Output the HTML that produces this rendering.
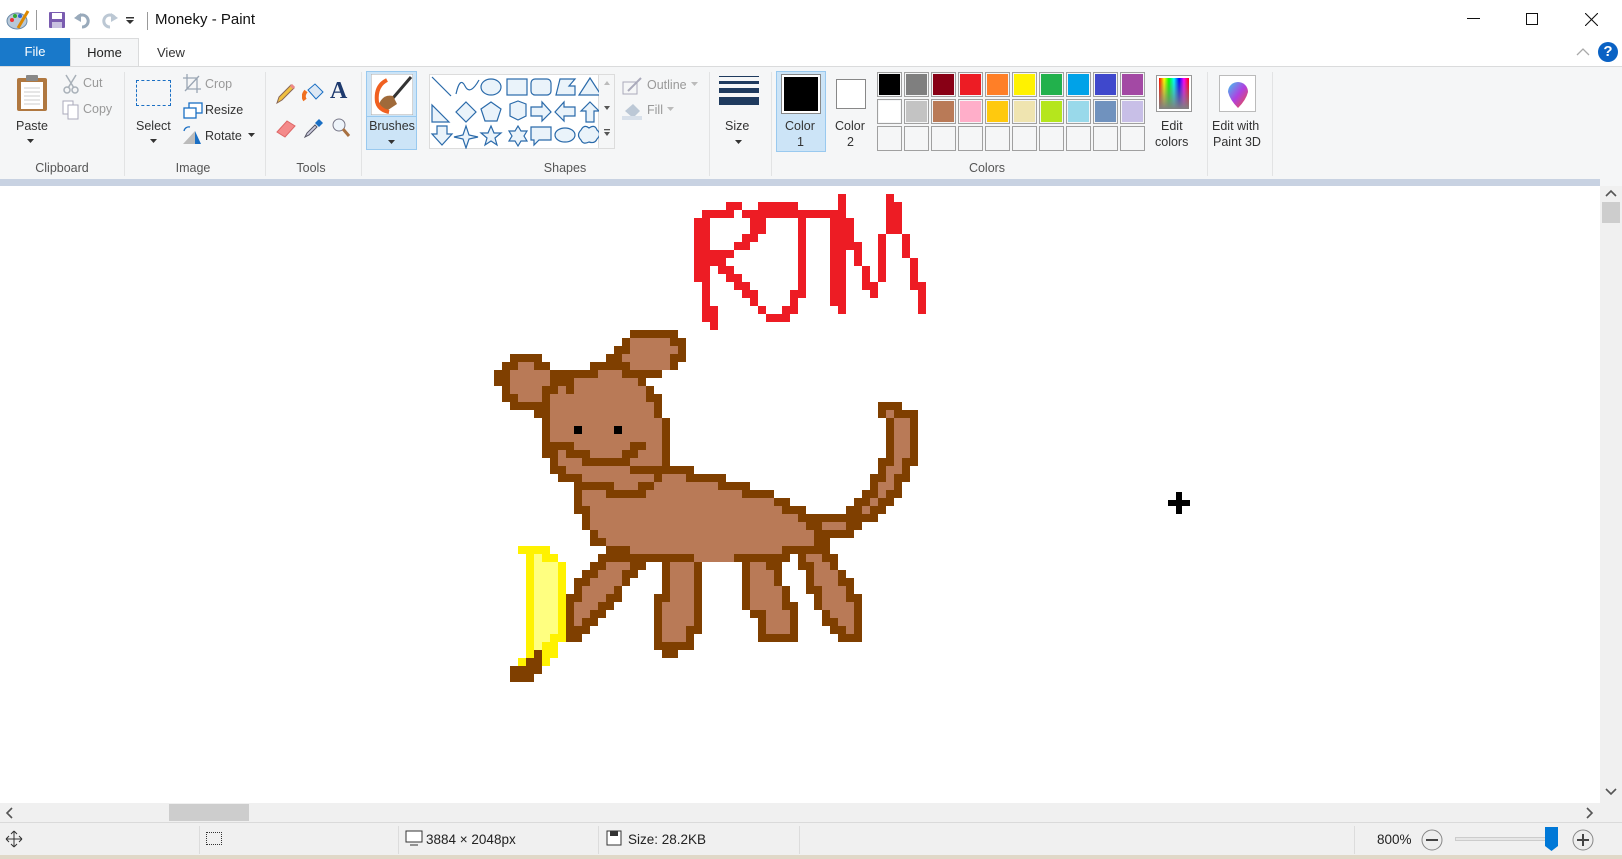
<!DOCTYPE html>
<html><head><meta charset="utf-8">
<style>
*{margin:0;padding:0;box-sizing:border-box}
body{width:1622px;height:859px;overflow:hidden;background:#fff;font-family:"Liberation Sans",sans-serif;color:#222;position:relative}
.a{position:absolute}
.t{position:absolute;font-size:12.5px;color:#333;white-space:nowrap}
.g{position:absolute;font-size:12.5px;color:#555;text-align:center}
.sep{position:absolute;top:72px;width:1px;height:104px;background:#e2e3e4}
.ssep{position:absolute;top:826px;width:1px;height:28px;background:#dcdcdc}
.pc{position:absolute;width:25px;height:25px;border:1px solid #a0a0a0}
.pc i{position:absolute;left:1px;top:1px;right:1px;bottom:1px}
</style></head><body>
<!-- title bar -->
<svg class="a" style="left:6px;top:8px" width="24" height="24" viewBox="0 0 24 24"><ellipse cx="11" cy="13" rx="10" ry="8" fill="#b8c8d8" stroke="#6a8aa8"/><circle cx="6" cy="12" r="2" fill="#e33"/><circle cx="9" cy="8" r="2" fill="#3a3"/><circle cx="14" cy="8" r="2" fill="#36c"/><path d="M12 20 L22 3" stroke="#d80" stroke-width="3"/></svg>
<div class="a" style="left:36px;top:10px;width:1px;height:20px;background:#999"></div>
<svg class="a" style="left:48px;top:11px" width="18" height="18"><rect x="1" y="1" width="16" height="16" fill="#7a5cb0" rx="1"/><rect x="4" y="2" width="10" height="6" fill="#fff"/><rect x="4" y="11" width="10" height="6" fill="#c8c0e0"/></svg>
<svg class="a" style="left:74px;top:11px" width="18" height="18"><path d="M3 7 A6 6 0 1 1 8 16" stroke="#9ab" stroke-width="3" fill="none"/><path d="M0 7 L7 2 L7 11Z" fill="#9ab"/></svg>
<svg class="a" style="left:100px;top:11px" width="18" height="18"><path d="M15 7 A6 6 0 1 0 10 16" stroke="#bcc8d4" stroke-width="3" fill="none"/><path d="M18 7 L11 2 L11 11Z" fill="#bcc8d4"/></svg>
<svg class="a" style="left:126px;top:17px" width="9" height="8"><rect x="0" y="0" width="8" height="1.5" fill="#333"/><path d="M0 3 L8 3 L4 7Z" fill="#333"/></svg>
<div class="a" style="left:147px;top:12px;width:1px;height:18px;background:#999"></div>
<div class="t" style="left:155px;top:11px;font-size:15px;color:#111">Moneky - Paint</div>
<div class="a" style="left:1467px;top:18px;width:13px;height:1px;background:#111"></div>
<div class="a" style="left:1526px;top:13px;width:12px;height:12px;border:1px solid #111"></div>
<svg class="a" style="left:1585px;top:13px" width="13" height="13"><path d="M0 0L13 13M13 0L0 13" stroke="#111" stroke-width="1.1"/></svg>
<!-- tabs -->
<div class="a" style="left:0;top:38px;width:70px;height:28px;background:#1979ca;color:#fff;font-size:13px;text-align:center;line-height:28px">File</div>
<div class="a" style="left:70px;top:38px;width:69px;height:29px;background:#f5f6f7;border:1px solid #dadbdc;border-bottom:none;font-size:13px;text-align:center;line-height:27px">Home</div>
<div class="t" style="left:157px;top:45px;font-size:13px">View</div>
<svg class="a" style="left:1576px;top:48px" width="14" height="8"><path d="M1 7L7 1L13 7" stroke="#aaa" fill="none" stroke-width="1.3"/></svg>
<div class="a" style="left:1598px;top:42px;width:20px;height:20px;border-radius:50%;background:#0a62c4;color:#fff;font-weight:bold;font-size:15px;text-align:center;line-height:20px">?</div>
<!-- ribbon -->
<div class="a" style="left:0;top:66px;width:1622px;height:113px;background:#f5f6f7;border-top:1px solid #dadbdc"></div>
<!-- clipboard -->
<svg class="a" style="left:15px;top:74px" width="34" height="38"><rect x="2" y="4" width="30" height="33" rx="2" fill="#b07840"/><rect x="6" y="8" width="22" height="27" fill="#fff"/><path d="M9 14h16M9 18h16M9 22h16M9 26h16M9 30h16" stroke="#ccc"/><rect x="11" y="1" width="12" height="6" rx="1" fill="#888"/></svg>
<div class="t" style="left:16px;top:119px">Paste</div>
<svg class="a" style="left:27px;top:139px" width="7" height="4"><path d="M0 0h7L3.5 4Z" fill="#333"/></svg>
<svg class="a" style="left:63px;top:74px" width="16" height="20"><circle cx="4" cy="16" r="3" fill="none" stroke="#a8b0b8" stroke-width="1.5"/><circle cx="12" cy="16" r="3" fill="none" stroke="#a8b0b8" stroke-width="1.5"/><path d="M3 1L11 14M13 1L5 14" stroke="#a8b0b8" stroke-width="1.5"/></svg>
<div class="t" style="left:83px;top:76px;color:#999">Cut</div>
<svg class="a" style="left:62px;top:100px" width="18" height="20"><rect x="1" y="1" width="10" height="13" fill="#fff" stroke="#aab"/><rect x="6" y="5" width="10" height="14" fill="#fff" stroke="#aab"/></svg>
<div class="t" style="left:83px;top:102px;color:#999">Copy</div>
<div class="g" style="left:20px;top:161px;width:84px">Clipboard</div>
<div class="sep" style="left:124px"></div>
<!-- image -->
<div class="a" style="left:136px;top:80px;width:35px;height:26px;border:1.5px dashed #1a6fc4"></div>
<div class="t" style="left:136px;top:119px">Select</div>
<svg class="a" style="left:150px;top:139px" width="7" height="4"><path d="M0 0h7L3.5 4Z" fill="#333"/></svg>
<svg class="a" style="left:183px;top:74px" width="18" height="20"><path d="M4 0V15H18M0 4H14V19M2 17L16 2" stroke="#9aa6b4" fill="none" stroke-width="1.3"/></svg>
<div class="t" style="left:205px;top:77px;color:#999">Crop</div>
<svg class="a" style="left:183px;top:102px" width="20" height="17"><rect x="6" y="1" width="13" height="10" fill="#fff" stroke="#1a6fc4" stroke-width="1.3"/><rect x="1" y="6" width="12" height="10" fill="#fff" stroke="#1a6fc4" stroke-width="1.3"/></svg>
<div class="t" style="left:205px;top:103px">Resize</div>
<svg class="a" style="left:182px;top:125px" width="20" height="20"><path d="M2 6 A5 5 0 0 1 8 2" stroke="#1a6fc4" fill="none" stroke-width="1.3"/><path d="M1 19L13 19L13 6Z" fill="#bbb"/><path d="M13 19L19 19L13 6Z" fill="#1a6fc4"/></svg>
<div class="t" style="left:205px;top:129px">Rotate</div>
<svg class="a" style="left:248px;top:133px" width="7" height="4"><path d="M0 0h7L3.5 4Z" fill="#333"/></svg>
<div class="g" style="left:150px;top:161px;width:86px">Image</div>
<div class="sep" style="left:265px"></div>
<!-- tools -->
<svg class="a" style="left:275px;top:83px" width="20" height="22"><path d="M2 20L4 14L16 2L19 5L7 17Z" fill="#f0c040" stroke="#865" /><path d="M16 2L19 5" stroke="#e88" stroke-width="3"/></svg>
<svg class="a" style="left:302px;top:82px" width="22" height="22"><path d="M6 8L13 2L21 10L14 17Z" fill="#dde8f4" stroke="#1a6fc4"/><path d="M4 9Q0 14 3 18" stroke="#f07020" stroke-width="4" fill="none"/></svg>
<div class="a" style="left:330px;top:78px;font-family:'Liberation Serif',serif;font-weight:bold;font-size:24px;color:#1e3a6e">A</div>
<svg class="a" style="left:275px;top:118px" width="22" height="20"><path d="M2 14L12 3L20 8L10 19Z" fill="#f48a8a" stroke="#d66"/></svg>
<svg class="a" style="left:303px;top:117px" width="20" height="22"><path d="M2 20L4 16L12 8L14 10L6 18Z" fill="#ccd" stroke="#556"/><path d="M12 6L16 2L20 6L16 10Z" fill="#1a6fc4"/></svg>
<svg class="a" style="left:331px;top:117px" width="20" height="22"><circle cx="8" cy="8" r="6" fill="#eef4fa" stroke="#778"/><path d="M12 12L18 19" stroke="#a87040" stroke-width="3"/></svg>
<div class="g" style="left:280px;top:161px;width:62px">Tools</div>
<div class="sep" style="left:361px"></div>
<!-- brushes -->
<div class="a" style="left:366px;top:71px;width:51px;height:79px;background:#cce4f7;border:1px solid #99c9ef"></div>
<div class="a" style="left:366px;top:116px;width:51px;height:1px;background:#99c9ef"></div>
<svg class="a" style="left:371px;top:74px" width="42" height="41"><rect x="0" y="0" width="42" height="41" fill="#fff" stroke="#aaa"/><path d="M40 3L22 24" stroke="#333" stroke-width="3"/><path d="M22 22Q12 20 8 30Q6 36 14 38L26 30Z" fill="#a06a3a"/><path d="M16 6Q4 12 6 28Q8 36 18 38" stroke="#f06020" stroke-width="4" fill="none"/></svg>
<div class="t" style="left:367px;top:119px;width:50px;text-align:center">Brushes</div>
<svg class="a" style="left:388px;top:140px" width="7" height="4"><path d="M0 0h7L3.5 4Z" fill="#333"/></svg>
<!-- shapes -->
<div class="a" style="left:429px;top:74px;width:170px;height:75px;background:#fff;border:1px solid #dcdcdc"></div>
<svg class="a" style="left:429px;top:74px" width="170" height="75" fill="#eaf3fa" stroke="#2a6aaa" stroke-width="1.2">
<path d="M3 3L22 22" fill="none"/>
<path d="M27 20Q31 2 36 12T50 6" fill="none"/>
<ellipse cx="62" cy="13" rx="10" ry="8"/>
<rect x="78" y="5" width="20" height="16"/>
<rect x="102" y="5" width="20" height="16" rx="4"/>
<path d="M127 21L131 5H146L140 12H146V21Z"/>
<path d="M161 4L150 21H172Z"/>
<path d="M3 31V48H20Z"/>
<path d="M37 28L47 38L37 48L27 38Z"/>
<path d="M62 28L72 35L68 47H56L52 35Z"/>
<path d="M81 30L89 27L97 30V42L89 46L81 42Z"/>
<path d="M102 33H113V28L122 38L113 47V42H102Z"/>
<path d="M146 33H135V28L126 38L135 47V42H146Z"/>
<path d="M161 28L170 37H165V48H157V37H152Z"/>
<path d="M8 52V60H3L13 71L23 60H18V52Z"/>
<path d="M37 52L40 61L49 63L40 65L37 74L34 65L25 63L34 61Z"/>
<path d="M62 52L65 59L72 59L66 64L68 71L62 67L56 71L58 64L52 59L59 59Z"/>
<path d="M89 52L92 57H98L95 62L98 67H92L89 72L86 67H80L83 62L80 57H86Z"/>
<path d="M102 53H122V66H110L105 71V66H102Z"/>
<ellipse cx="136" cy="61" rx="10" ry="7"/>
<path d="M152 56Q155 50 160 54Q166 50 168 56Q173 60 168 65Q166 70 160 68Q154 71 152 66Q147 61 152 56Z"/>
</svg>
<div class="a" style="left:599px;top:74px;width:16px;height:75px;border:1px solid #dcdcdc;border-left:none"></div>
<svg class="a" style="left:603px;top:80px" width="8" height="60"><path d="M1 5L4 1L7 5Z" fill="#bbb"/><path d="M1 26L4 30L7 26Z" fill="#555"/><rect x="1" y="49" width="6" height="1.3" fill="#555"/><path d="M1 52L4 56L7 52Z" fill="#555"/></svg>
<svg class="a" style="left:622px;top:77px" width="22" height="18"><rect x="1" y="5" width="14" height="12" fill="none" stroke="#aab"/><path d="M6 14L19 1" stroke="#aab" stroke-width="2"/></svg>
<div class="t" style="left:647px;top:78px;color:#999">Outline</div>
<svg class="a" style="left:691px;top:82px" width="7" height="4"><path d="M0 0h7L3.5 4Z" fill="#bbb"/></svg>
<svg class="a" style="left:622px;top:101px" width="22" height="20"><path d="M3 10L11 3L18 10L11 17Z" fill="#bcc8d6"/><rect x="0" y="15" width="20" height="4" fill="#d8e0ea"/></svg>
<div class="t" style="left:647px;top:103px;color:#999">Fill</div>
<svg class="a" style="left:667px;top:107px" width="7" height="4"><path d="M0 0h7L3.5 4Z" fill="#bbb"/></svg>
<div class="g" style="left:525px;top:161px;width:80px">Shapes</div>
<div class="sep" style="left:709px"></div>
<!-- size -->
<div class="a" style="left:719px;top:76px;width:40px;height:1px;background:#1e3a5e"></div>
<div class="a" style="left:719px;top:81px;width:40px;height:3px;background:#1e3a5e"></div>
<div class="a" style="left:719px;top:88px;width:40px;height:5px;background:#1e3a5e"></div>
<div class="a" style="left:719px;top:97px;width:40px;height:8px;background:#1e3a5e"></div>
<div class="t" style="left:725px;top:119px">Size</div>
<svg class="a" style="left:735px;top:140px" width="7" height="4"><path d="M0 0h7L3.5 4Z" fill="#333"/></svg>
<div class="sep" style="left:771px"></div>
<!-- color 1/2 -->
<div class="a" style="left:776px;top:71px;width:50px;height:81px;background:#cce4f7;border:1px solid #99c9ef"></div>
<div class="a" style="left:781px;top:74px;width:40px;height:40px;border:1px solid #888;background:#fff;padding:2px"><div style="width:100%;height:100%;background:#000"></div></div>
<div class="t" style="left:785px;top:119px">Color</div>
<div class="t" style="left:797px;top:135px">1</div>
<div class="a" style="left:836px;top:79px;width:30px;height:30px;border:1px solid #888;background:#fff"></div>
<div class="t" style="left:835px;top:119px">Color</div>
<div class="t" style="left:847px;top:135px">2</div>
<div id="pal"></div>
<svg class="a" style="left:1156px;top:75px" width="36" height="37"><defs><linearGradient id="hg" x1="0" x2="1"><stop offset="0" stop-color="#f00"/><stop offset=".17" stop-color="#ff0"/><stop offset=".33" stop-color="#0f0"/><stop offset=".5" stop-color="#0ff"/><stop offset=".67" stop-color="#00f"/><stop offset=".83" stop-color="#f0f"/><stop offset="1" stop-color="#f00"/></linearGradient><linearGradient id="vg" x1="0" y1="0" x2="0" y2="1"><stop offset="0" stop-color="#808080" stop-opacity="0"/><stop offset="1" stop-color="#808080" stop-opacity="1"/></linearGradient></defs><rect x="0.5" y="0.5" width="35" height="36" fill="#fff" stroke="#999"/><rect x="3" y="3" width="30" height="31" fill="url(#hg)"/><rect x="3" y="3" width="30" height="31" fill="url(#vg)"/></svg>
<div class="t" style="left:1161px;top:119px">Edit</div>
<div class="t" style="left:1155px;top:135px">colors</div>
<div class="g" style="left:947px;top:161px;width:80px">Colors</div>
<div class="sep" style="left:1207px"></div>
<div class="a" style="left:1219px;top:75px;width:37px;height:37px;border:1px solid #bbb;background:#fff"></div>
<svg class="a" style="left:1224px;top:78px" width="28" height="32"><defs><linearGradient id="p3" x1="0" y1="0" x2="1" y2="1"><stop offset="0" stop-color="#3cc8f0"/><stop offset=".5" stop-color="#b040e0"/><stop offset="1" stop-color="#f05030"/></linearGradient></defs><path d="M14 30Q6 22 4 14A10 10 0 1 1 24 14Q22 22 14 30Z" fill="url(#p3)"/></svg>
<div class="t" style="left:1212px;top:119px">Edit with</div>
<div class="t" style="left:1213px;top:135px">Paint 3D</div>
<div class="sep" style="left:1272px"></div>
<!-- separator band -->
<div class="a" style="left:0;top:179px;width:1600px;height:7px;background:#c8d2e2"></div>
<div class="a" style="left:1600px;top:179px;width:22px;height:7px;background:#f5f6f7"></div>
<!-- canvas -->
<svg id="art" class="a" style="left:0;top:0" width="1600" height="803"></svg>
<svg class="a" style="left:1168px;top:492px" width="22" height="22"><path d="M8 0H14V8H22V14H14V22H8V14H0V8H8Z" fill="#000"/></svg>
<!-- scrollbars -->
<div class="a" style="left:1600px;top:186px;width:22px;height:617px;background:#f0f0f0"></div>
<svg class="a" style="left:1605px;top:188px" width="12" height="10"><path d="M1 8L6 3L11 8" stroke="#555" stroke-width="1.6" fill="none"/></svg>
<div class="a" style="left:1602px;top:202px;width:18px;height:21px;background:#cdcdcd"></div>
<svg class="a" style="left:1605px;top:787px" width="12" height="10"><path d="M1 2L6 7L11 2" stroke="#555" stroke-width="1.6" fill="none"/></svg>
<div class="a" style="left:0;top:803px;width:1622px;height:19px;background:#f0f0f0"></div>
<svg class="a" style="left:4px;top:807px" width="10" height="12"><path d="M8 1L3 6L8 11" stroke="#555" stroke-width="1.6" fill="none"/></svg>
<div class="a" style="left:169px;top:804px;width:80px;height:17px;background:#cdcdcd"></div>
<svg class="a" style="left:1585px;top:807px" width="10" height="12"><path d="M2 1L7 6L2 11" stroke="#555" stroke-width="1.6" fill="none"/></svg>
<!-- status bar -->
<div class="a" style="left:0;top:822px;width:1622px;height:34px;background:#f0f0f0;border-top:1px solid #dadada"></div>
<div class="a" style="left:0;top:855px;width:1622px;height:4px;background:#e0d8c8"></div>
<svg class="a" style="left:5px;top:830px" width="18" height="18"><path d="M9 1V17M1 9H17M9 1L6 4M9 1L12 4M9 17L6 14M9 17L12 14M1 9L4 6M1 9L4 12M17 9L14 6M17 9L14 12" stroke="#333" fill="none"/></svg>
<div class="ssep" style="left:199px"></div>
<div class="a" style="left:206px;top:832px;width:16px;height:13px;border:1px dotted #333"></div>
<div class="ssep" style="left:398px"></div>
<svg class="a" style="left:405px;top:830px" width="18" height="16"><rect x="1" y="1" width="16" height="11" fill="#fff" stroke="#333"/><path d="M5 15H13" stroke="#333"/></svg>
<div class="t" style="left:426px;top:832px;font-size:13.5px;color:#222">3884 × 2048px</div>
<div class="ssep" style="left:598px"></div>
<svg class="a" style="left:606px;top:830px" width="16" height="16"><rect x="1" y="1" width="14" height="14" fill="#fff" stroke="#333"/><rect x="4" y="1" width="8" height="5" fill="#333"/></svg>
<div class="t" style="left:628px;top:832px;font-size:13.5px;color:#222">Size: 28.2KB</div>
<div class="ssep" style="left:799px"></div>
<div class="ssep" style="left:1354px"></div>
<div class="t" style="left:1377px;top:832px;font-size:13.5px;color:#222">800%</div>
<svg class="a" style="left:1421px;top:829px" width="22" height="22"><circle cx="11" cy="11" r="10" fill="#eee" stroke="#888"/><path d="M5 11H17" stroke="#444" stroke-width="2"/></svg>
<div class="a" style="left:1455px;top:837px;width:103px;height:4px;background:#e6e6e6;border:1px solid #ccc"></div>
<svg class="a" style="left:1545px;top:827px" width="14" height="25"><path d="M0 0H13V19L6.5 24L0 19Z" fill="#0078d7"/></svg>
<svg class="a" style="left:1572px;top:829px" width="22" height="22"><circle cx="11" cy="11" r="10" fill="#eee" stroke="#888"/><path d="M5 11H17M11 5V17" stroke="#444" stroke-width="2"/></svg>
<script>
(function(){
var pal=document.getElementById('pal');
var r1=['#000000','#7f7f7f','#880015','#ed1c24','#ff7f27','#fff200','#22b14c','#00a2e8','#3f48cc','#a349a4'];
var r2=['#ffffff','#c3c3c3','#b97a57','#ffaec9','#ffc90e','#efe4b0','#b5e61d','#99d9ea','#7092be','#c8bfe7'];
var h='';
for(var i=0;i<10;i++){var x=877+i*27;
h+='<div class="pc" style="left:'+x+'px;top:72px"><i style="background:'+r1[i]+'"></i></div>';
h+='<div class="pc" style="left:'+x+'px;top:99px"><i style="background:'+r2[i]+'"></i></div>';
h+='<div class="pc" style="left:'+x+'px;top:126px;background:#f5f6f7"></div>';}
pal.innerHTML=h;
var D='#7f3f00',L='#b97a57',Y='#fff200',P='#ffff80',R='#ed1c24',E='#000';
// row, color, c0, c1
var m=[
[0,D,17,22],[1,D,16,16],[1,L,17,21],[1,D,22,23],[2,D,15,16],[2,L,17,22],[2,D,23,23],
[3,D,2,5],[3,D,14,15],[3,L,16,21],[3,D,22,23],
[4,D,1,2],[4,L,3,4],[4,D,5,6],[4,D,12,16],[4,L,17,21],[4,D,22,22],
[5,D,0,1],[5,L,2,6],[5,D,7,12],[5,L,13,15],[5,D,16,20],
[6,D,0,1],[6,L,2,6],[6,D,7,9],[6,L,10,17],[6,D,18,18],
[7,D,1,1],[7,L,2,5],[7,D,6,7],[7,L,8,8],[7,D,9,9],[7,L,10,18],[7,D,19,19],
[8,D,1,2],[8,L,3,5],[8,D,6,6],[8,L,7,18],[8,D,19,20],
[9,D,2,6],[9,L,7,19],[9,D,20,20],[10,D,5,6],[10,L,7,19],[10,D,20,20],
[11,D,6,6],[11,L,7,20],[11,D,21,21],[12,D,6,6],[12,L,7,20],[12,D,21,21],[12,E,10,10],[12,E,15,15],
[13,D,6,6],[13,L,7,20],[13,D,21,21],
[14,D,6,9],[14,L,10,16],[14,D,17,18],[14,L,19,20],[14,D,21,21],
[15,D,6,7],[15,L,8,8],[15,D,9,11],[15,L,12,15],[15,D,16,17],[15,L,18,20],[15,D,21,21],
[16,D,7,7],[16,L,8,10],[16,D,11,16],[16,L,17,20],[16,D,21,21],
[17,D,7,8],[17,L,9,16],[17,D,17,24],
[18,D,8,10],[18,L,11,19],[18,D,20,20],[18,L,21,23],[18,D,24,28],
[19,D,10,14],[19,L,15,17],[19,D,18,19],[19,L,20,27],[19,D,28,31],
[20,D,10,10],[20,L,11,13],[20,D,14,18],[20,L,19,30],[20,D,31,34],
[21,D,10,10],[21,L,11,34],[21,D,35,36],
[22,D,10,11],[22,L,12,35],[22,D,36,38],
[23,D,11,11],[23,L,12,37],[23,D,38,47],
[24,D,11,11],[24,L,12,38],[24,D,39,40],[24,L,41,43],[24,D,44,45],
[25,D,12,12],[25,L,13,39],[25,D,40,44],
[26,D,12,13],[26,L,14,39],[26,D,40,41],
[27,D,14,16],[27,L,17,35],[27,D,36,41],
[28,D,13,24],[28,L,25,29],[28,D,30,36],[28,D,38,38],[28,L,39,40],[28,D,41,42],
// tail
[9,D,48,50],[10,D,48,48],[10,L,49,49],[10,D,50,52],
[11,D,49,49],[11,L,50,51],[11,D,52,52],[12,D,49,49],[12,L,50,51],[12,D,52,52],
[13,D,49,49],[13,L,50,51],[13,D,52,52],[14,D,49,49],[14,L,50,51],[14,D,52,52],
[15,D,49,49],[15,L,50,51],[15,D,52,52],[16,D,48,49],[16,L,50,50],[16,D,51,52],
[17,D,48,48],[17,L,49,50],[17,D,51,51],[18,D,47,48],[18,L,49,49],[18,D,50,51],
[19,D,47,47],[19,L,48,49],[19,D,50,50],[20,D,46,47],[20,L,48,48],[20,D,49,50],
[21,D,45,46],[21,L,47,47],[21,D,48,49],[22,D,44,45],[22,L,46,46],[22,D,47,48],
// leg1
[29,D,12,13],[29,L,14,16],[29,D,17,18],[30,D,11,12],[30,L,13,15],[30,D,16,17],
[31,D,10,11],[31,L,12,15],[31,D,16,16],[32,D,10,10],[32,L,11,14],[32,D,15,15],
[33,D,9,10],[33,L,11,13],[33,D,14,15],[34,D,9,9],[34,L,10,12],[34,D,13,14],
[35,D,9,9],[35,L,10,11],[35,D,12,13],[36,D,9,9],[36,L,10,10],[36,D,11,12],
[37,D,9,11],[38,D,9,10],
// leg2
[29,D,21,21],[29,L,22,24],[29,D,25,25],[30,D,21,21],[30,L,22,24],[30,D,25,25],
[31,D,21,21],[31,L,22,24],[31,D,25,25],[32,D,21,21],[32,L,22,24],[32,D,25,25],
[33,D,20,21],[33,L,22,24],[33,D,25,25],[34,D,20,20],[34,L,21,24],[34,D,25,25],
[35,D,20,20],[35,L,21,24],[35,D,25,25],[36,D,20,20],[36,L,21,24],[36,D,25,25],
[37,D,20,20],[37,L,21,23],[37,D,24,25],[38,D,20,20],[38,L,21,23],[38,D,24,24],
[39,D,20,24],[40,D,21,22],
// leg3
[29,D,31,31],[29,L,32,33],[29,D,34,35],[30,D,31,31],[30,L,32,34],[30,D,35,35],
[31,D,31,31],[31,L,32,34],[31,D,35,35],[32,D,31,31],[32,L,32,35],[32,D,36,36],
[33,D,31,31],[33,L,32,35],[33,D,36,36],[34,D,31,31],[34,L,32,35],[34,D,36,37],
[35,D,32,33],[35,L,34,36],[35,D,37,37],[36,D,33,33],[36,L,34,36],[36,D,37,37],
[37,D,33,33],[37,L,34,36],[37,D,37,37],[38,D,33,37],
// leg4
[29,D,38,39],[29,L,40,41],[29,D,42,42],[30,D,39,39],[30,L,40,42],[30,D,43,43],
[31,D,39,39],[31,L,40,42],[31,D,43,44],[32,D,39,40],[32,L,41,43],[32,D,44,44],
[33,D,40,40],[33,L,41,43],[33,D,44,45],[34,D,40,40],[34,L,41,44],[34,D,45,45],
[35,D,41,41],[35,L,42,44],[35,D,45,45],[36,D,41,42],[36,L,43,44],[36,D,45,45],
[37,D,42,43],[37,L,44,44],[37,D,45,45],[38,D,43,45],
// banana
[27,Y,3,6],[28,Y,4,4],[28,P,5,5],[28,Y,6,7],[29,Y,4,4],[29,P,5,7],[29,Y,8,8],
[30,Y,4,4],[30,P,5,7],[30,Y,8,8],[31,Y,4,4],[31,P,5,7],[31,Y,8,8],[32,Y,4,4],[32,P,5,7],[32,Y,8,8],
[33,Y,4,4],[33,P,5,7],[33,Y,8,8],[34,Y,4,4],[34,P,5,7],[34,Y,8,8],[35,Y,4,4],[35,P,5,7],[35,Y,8,8],
[36,Y,4,4],[36,P,5,7],[36,Y,8,8],[37,Y,4,4],[37,P,5,7],[37,Y,8,8],[38,Y,4,4],[38,P,5,6],[38,Y,7,8],
[39,Y,4,4],[39,P,5,5],[39,Y,6,7],[40,Y,4,4],[40,D,5,5],[40,Y,6,7],[41,Y,3,3],[41,D,4,5],[41,Y,6,6],
[42,D,2,5],[43,D,2,4]
];
var red=[[0,18,18],[0,24,24],[1,4,5],[1,8,12],[1,18,18],[1,24,25],[2,1,4],[2,6,18],[2,24,25],
[3,0,1],[3,7,8],[3,13,13],[3,17,19],[3,24,25],[4,0,1],[4,7,8],[4,13,13],[4,17,19],[4,24,25],
[5,0,1],[5,6,7],[5,13,13],[5,17,19],[5,23,23],[5,26,26],[6,0,1],[6,5,6],[6,13,13],[6,17,20],[6,23,23],[6,26,26],
[7,0,4],[7,13,13],[7,17,18],[7,20,20],[7,23,23],[7,26,26],[8,0,3],[8,13,13],[8,17,18],[8,20,20],[8,23,23],[8,27,27],
[9,0,1],[9,3,4],[9,13,13],[9,17,18],[9,21,21],[9,23,23],[9,27,27],[10,0,1],[10,4,5],[10,13,13],[10,17,18],[10,21,21],[10,23,23],[10,27,27],
[11,1,1],[11,5,6],[11,13,13],[11,17,18],[11,21,22],[11,27,28],[12,1,1],[12,6,7],[12,12,13],[12,17,18],[12,22,22],[12,28,28],
[13,1,1],[13,7,7],[13,12,12],[13,17,18],[13,28,28],[14,1,2],[14,8,8],[14,11,12],[14,18,18],[14,28,28],
[15,1,2],[15,9,11],[16,2,2]];
var s='';
m.forEach(function(a){s+='<rect x="'+(494+a[2]*8)+'" y="'+(330+a[0]*8)+'" width="'+((a[3]-a[2]+1)*8)+'" height="8" fill="'+a[1]+'"/>';});
red.forEach(function(a){s+='<rect x="'+(694+a[1]*8)+'" y="'+(194+a[0]*8)+'" width="'+((a[2]-a[1]+1)*8)+'" height="8" fill="'+R+'"/>';});
document.getElementById('art').innerHTML=s;
})();
</script>
</body></html>
